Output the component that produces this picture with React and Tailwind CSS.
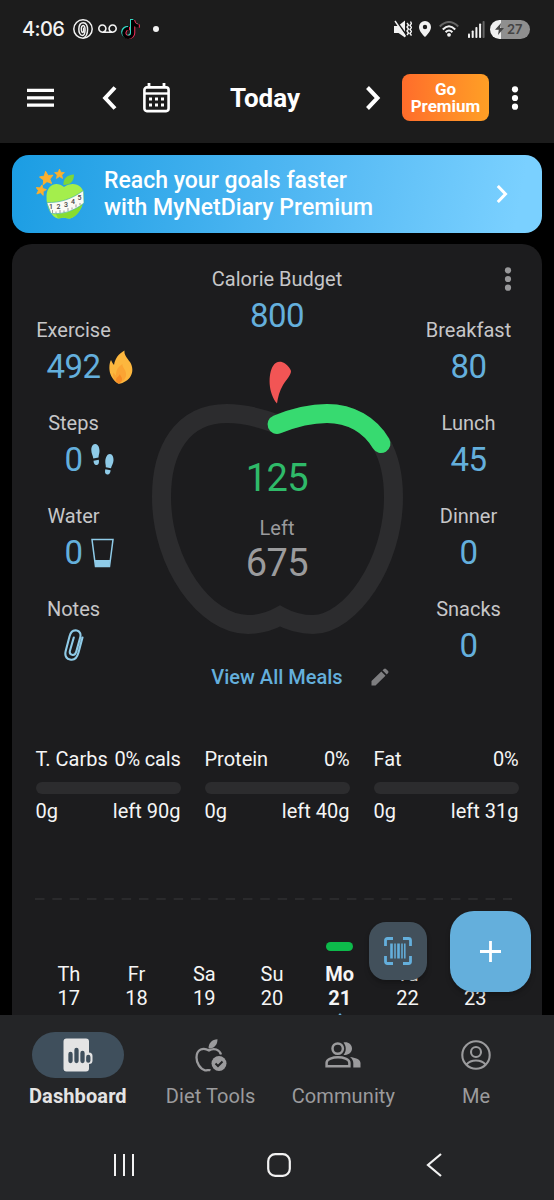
import { FaTiktok } from 'react-icons/fa';
import { MdVoicemail } from 'react-icons/md';
import clsx from 'clsx';

const APPLE =
    'M277 424 C293 418 309 413.5 327 413.5 C351 413.5 370 425 381 443 C389 457 393.5 475 393.5 497 C393.5 564 350 624.5 313 624.5 C301 624.5 291 622 280 616 C269 622 260 624.5 248 624.5 C205 624.5 161.5 564 161.5 497 C161.5 450 182 413.5 227 413.5 C245 413.5 261 418 277 424 Z';

const macros = [
    { name: 'T. Carbs', share: '0% cals', eaten: '0g', left: 'left 90g' },
    { name: 'Protein', share: '0%', eaten: '0g', left: 'left 40g' },
    { name: 'Fat', share: '0%', eaten: '0g', left: 'left 31g' },
];

const days = [
    { day: 'Th', date: 17 },
    { day: 'Fr', date: 18 },
    { day: 'Sa', date: 19 },
    { day: 'Su', date: 20 },
    { day: 'Mo', date: 21, active: true },
    { day: 'Tu', date: 22 },
    { day: 'We', date: 23 },
];

const meals = [
    { label: 'Breakfast', value: 80 },
    { label: 'Lunch', value: 45 },
    { label: 'Dinner', value: 0 },
    { label: 'Snacks', value: 0 },
];

const FlameIcon = () => (
    <svg width="24" height="34" viewBox="0 0 24 34">
        <path d="M15.500 0.500C15 5 18 8 21 12C25 18 24 27 17 31C14 33 11 34 9 33.500C5 31 1 26 0.500 20C0 15 1 12 2 10C3 12 4 14 5 15C6 9 9 4 15.500 0.500Z" fill="#fdb73e" />
        <path d="M13.500 14C13 18 18 20 17 26C16.500 29 14 32 9.500 33.500C5 31 3 27 4.500 22.500C5.500 24 6 25 7 25.500C7 20 9 17 13.500 14Z" fill="#fba433" />
        <path d="M11 24C11 26 13.500 27 13 30C12.500 32 11 33 9.500 33.500C7 32 6.500 30 7.500 28C8.500 27 10 26 11 24Z" fill="#f78d25" />
    </svg>
);

const StepsIcon = () => (
    <svg width="23" height="31" viewBox="0 0 23 31" fill="#8fcbe8">
        <path d="M4 0C7 -0.200 8.500 3.500 8.500 7C8.500 9.500 7.600 11 7.500 13.500L2.300 14.500C2 11.500 0.300 9.500 0.300 6C0.300 2.800 1.600 0.200 4 0Z" />
        <path d="M2.500 16.800L7.800 15.700C8.300 18.500 7.900 20.700 5.800 21C3.500 21.300 2.700 19.500 2.500 16.800Z" />
        <path d="M19 10C21.400 10.200 22.700 13 22.500 16.500C22.300 20 20.400 21.500 20 24.300L14.800 23.200C15 21 14.100 19.500 14.300 17C14.600 13.300 16.200 9.800 19 10Z" />
        <path d="M14.300 25.200L19.600 26.300C19.400 29 18.200 31 16 30.500C13.800 30 13.700 27.700 14.300 25.200Z" />
    </svg>
);

const WaterIcon = () => (
    <svg width="23" height="30" viewBox="0 0 23 30">
        <path d="M1 1.500H22L18.500 28.500H4.500Z" fill="none" stroke="#8fcbe8" strokeWidth="1.500" />
        <path d="M3.800 22H19.200L18.400 29H4.600Z" fill="#8fcbe8" />
    </svg>
);

const ClipIcon = () => (
    <svg width="20" height="32" viewBox="0 0 20 32" fill="none" stroke="#8fcbe8" strokeWidth="2.100" strokeLinecap="round">
        <path d="M18.500 8.500L14.500 23.500C12.800 29.800 9.500 31.400 6 30.500C2.300 29.500 0.600 26.500 1.700 22L5.500 7.500C6.600 3 9.500 0.800 12.800 1.500C16 2.300 17.100 5 16.200 8.500L12.300 22.500C11.500 25.300 9.800 26.300 8 25.800C6 25.200 5.400 23.600 6 21.500L9.800 8.500" />
    </svg>
);

const stats = [
    { label: 'Exercise', value: '492', icon: <FlameIcon /> },
    { label: 'Steps', value: '0', icon: <StepsIcon /> },
    { label: 'Water', value: '0', icon: <WaterIcon /> },
];

const Dots = ({ className }) => (
    <svg width="8" height="26" viewBox="0 0 8 26" className={className} fill="currentColor">
        <circle cx="4" cy="4.300" r="3.100" />
        <circle cx="4" cy="13" r="3.100" />
        <circle cx="4" cy="21.700" r="3.100" />
    </svg>
);

const StatusBar = () => (
    <div className="flex h-[58px] items-center pl-[22px] pr-6 text-[#f2f2f2]">
        <span className="w-[43px] font-[Inter] text-[20px] font-medium leading-6 tracking-[-0.6px]">4:06</span>
        <svg width="20" height="20" viewBox="0 0 20 20" className="ml-2" fill="none" stroke="currentColor" strokeWidth="1.500">
            <circle cx="10" cy="10" r="9.200" />
            <path d="M10 13.500C8 13.500 7.500 6.500 10.200 6.500C13 6.500 12.500 16.500 9.500 16.500C4.500 16.500 4.500 3.700 10.200 3.700C16.500 3.700 15.500 17 10.500 19" />
            <path d="M10 13.500C11.300 13 10.800 9 10 9" />
        </svg>
        <MdVoicemail className="ml-[5px] h-5 w-[19px]" />
        <div className="relative ml-[5px] h-5 w-[19px]">
            <FaTiktok className="absolute -left-px top-0 h-[19px] w-[17px] text-[#35d8c5]" />
            <FaTiktok className="absolute left-px top-px h-[19px] w-[17px] text-[#f5305c]" />
            <FaTiktok className="absolute left-0 top-[0.5px] h-[19px] w-[17px] text-black" />
        </div>
        <span className="ml-3 size-1.5 rounded-full bg-current" />
        <div className="ml-auto flex items-center">
            <svg width="18" height="19" viewBox="0 0 18 19" fill="currentColor">
                <path d="M0 6H4L11 0.500V17.500L4.500 13H0Z" />
                <path d="M1.500 0L13.500 16.500" stroke="#1c1c1c" strokeWidth="1.800" />
                <path d="M1 1L11.500 16.500" stroke="currentColor" strokeWidth="1.400" />
                <path d="M13 3L14.500 5L13 7L14.500 9L13 11L14.500 13L13 15M16.500 1.500L17.500 3.500L16 5.500L17.500 7.500L16 9.500L17.500 11.500L16 13.500L17.500 15.500" fill="none" stroke="currentColor" strokeWidth="1.400" />
            </svg>
            <svg width="12" height="16" viewBox="0 0 12 16" className="ml-[7px]" fill="currentColor">
                <path fillRule="evenodd" d="M6 0A6 6 0 0 1 12 6C12 10 8 14 6 16C4 14 0 10 0 6A6 6 0 0 1 6 0ZM6 3.800A2.200 2.200 0 1 0 6 8.200A2.200 2.200 0 0 0 6 3.800Z" />
            </svg>
            <svg width="20" height="16" viewBox="0 0 20 16" className="ml-2" fill="none" strokeWidth="2">
                <path d="M0.800 5.500Q10 -3.500 19.200 5.500" stroke="#666" />
                <path d="M3.800 8.500Q10 2 16.200 8.500M6.600 11.200Q10 7.700 13.400 11.200" stroke="currentColor" />
                <circle cx="10" cy="13.800" r="1.900" fill="currentColor" />
            </svg>
            <svg width="17" height="17" viewBox="0 0 17 17" className="ml-[9px]" fill="currentColor">
                <rect x="0" y="12.500" width="2" height="4.500" rx="0.800" />
                <rect x="3.700" y="9.500" width="2" height="7.500" rx="0.800" />
                <rect x="7.400" y="6" width="2" height="11" rx="0.800" />
                <rect x="11.100" y="2.500" width="2" height="14.500" rx="0.800" />
                <rect x="14.600" y="0" width="2" height="17" rx="0.800" fill="#666" />
            </svg>
            <div className="ml-[5px] flex h-[19px] w-10 items-center rounded-full bg-linear-to-r from-[#f0f0f0] from-27% to-[#8f8f8f] to-27% text-[#444]">
                <svg width="9" height="12" viewBox="0 0 9 12" className="ml-[5px]" fill="currentColor">
                    <path d="M6 0L0 6.800H3.800L3 12L9 5H5.200Z" />
                </svg>
                <span className="ml-[3px] font-[Inter] text-[13px] font-semibold leading-none">27</span>
            </div>
        </div>
    </div>
);

const Toolbar = () => (
    <div className="flex h-[79px] items-center pl-[27px] text-white">
        <svg width="27" height="20" viewBox="0 0 27 20" fill="currentColor">
            <path d="M0 0.800H27V4H0ZM0 8.300H27V11.500H0ZM0 15.500H27V18.700H0Z" />
        </svg>
        <svg width="15" height="24" viewBox="0 0 15 24" className="ml-[48px]" fill="none" stroke="currentColor" strokeWidth="4">
            <path d="M13 1.500L3.200 12L13 22.500" />
        </svg>
        <svg width="27" height="30" viewBox="0 0 27 30" className="ml-[26px]" fill="none" stroke="currentColor">
            <rect x="1.400" y="4.400" width="24.200" height="23.700" rx="2.500" strokeWidth="2.600" />
            <path d="M1 10.500H26" strokeWidth="2.400" />
            <path d="M6 0V4M21 0V4" strokeWidth="2.800" />
            <path d="M6 16H21M6 22H21" strokeWidth="3" strokeDasharray="3 3" />
        </svg>
        <h1 className="ml-[60px] w-[72px] whitespace-nowrap text-[26px] font-bold leading-8">Today</h1>
        <svg width="15" height="24" viewBox="0 0 15 24" className="ml-[64px]" fill="none" stroke="currentColor" strokeWidth="4">
            <path d="M1.500 1.500L11.500 12L1.500 22.500" />
        </svg>
        <button className="ml-[21px] flex h-[47px] w-[87px] flex-col items-center justify-center rounded-lg bg-linear-to-r from-[#ff6c2b] to-[#ff9f25] text-[17px] font-bold leading-[17px]">
            <span>Go</span>
            <span>Premium</span>
        </button>
        <Dots className="ml-[22px]" />
    </div>
);

const Star = ({ x, y, s, a = 0 }) => (
    <path transform={`translate(${x} ${y}) rotate(${a}) scale(${s})`} d="M0 -7L2 -2.500L7 -2L3.300 1.400L4.400 6.400L0 3.700L-4.400 6.400L-3.300 1.400L-7 -2L-2 -2.500Z" fill="#fbb02d" stroke="#fbb02d" strokeWidth="1" strokeLinejoin="round" />
);

const PremiumBanner = () => (
    <div className="flex h-[78px] items-center rounded-[17px] bg-linear-[100deg] from-[#1b9de3] via-[#52b8f3] via-55% to-[#7ad0ff] to-95% pl-6 text-white">
        <svg width="50" height="52" viewBox="0 0 50 52">
            <Star x={10.5} y={10} s={0.95} a={-8} />
            <Star x={23.5} y={6} s={0.7} />
            <Star x={5} y={22} s={0.75} a={12} />
            <path d="M27.500 17C27 10.500 31 7 38 6.500C38 13 34.500 17 27.500 17Z" fill="#7ed638" />
            <path d="M28 19C36 13 48 16 48 28C48 40 39 50.500 33 50.500C30 50.500 29 49.500 27.500 49.500C26 49.500 25 50.500 22 50.500C16 49.500 10 40 10.500 28C11 16 21 13 28 19Z" fill="#a4ee4c" />
            <path d="M20 46C34 47 44 38 47.500 30C47.500 41 39 50.500 33 50.500C30 50.500 29 49.500 27.500 49.500C26 49.500 25 50.500 22 50.500Z" fill="#87dc30" />
            <path d="M10.800 34.500C24 35 36 31 47.500 22.500L48 35C38 43 27 46.500 15 45.500Z" fill="#fbfbf5" stroke="#35a9a0" strokeWidth="0.600" />
            <path d="M16.500 45V42M20 45.500V43.500M24 45V42M28 44.500V42.500M32 43V40M36 41.500V39.500M40 39.500V36.500M44 37V35" stroke="#777" strokeWidth="0.700" />
            <g fill="#444" className="text-[7px] font-medium">
                <text x="13" y="41">1</text>
                <text x="20.5" y="40.5">2</text>
                <text x="28" y="38.5">3</text>
                <text x="35" y="35.5">4</text>
                <text x="41.5" y="31.5">5</text>
            </g>
        </svg>
        <p className="ml-[18px] whitespace-nowrap text-[23px] font-medium leading-[27px]">
            Reach your goals faster
            <br />
            with MyNetDiary Premium
        </p>
        <svg width="12" height="18" viewBox="0 0 12 18" className="ml-auto mr-[34px]" fill="none" stroke="currentColor" strokeWidth="3">
            <path d="M1.800 1L9.500 9L1.800 17" />
        </svg>
    </div>
);

const Label = ({ children }) => <p className="h-6 text-center text-[20px] leading-6 text-[#c6c6c8]">{children}</p>;

const Amount = ({ children }) => <span className="block h-10 pt-px text-center text-[33px] leading-10 tracking-[-0.5px] text-[#64afdc]">{children}</span>;

const CalorieSummary = () => (
    <section className="grid h-[470px] grid-cols-[135px_260px_135px]">
        <div className="pr-3 pt-[74px]">
            {stats.map((s) => (
                <div key={s.label} className="h-[93px]">
                    <Label>{s.label}</Label>
                    <div className="mt-1 grid h-10 grid-cols-[1fr_auto_1fr] items-center">
                        <div className="col-start-2">
                            <Amount>{s.value}</Amount>
                        </div>
                        <span className="ml-2 pt-px">{s.icon}</span>
                    </div>
                </div>
            ))}
            <Label>Notes</Label>
            <div className="mt-1 flex h-10 items-center justify-center">
                <ClipIcon />
            </div>
        </div>

        <div className="flex flex-col items-center pt-[23px]">
            <Label>Calorie Budget</Label>
            <div className="mt-1">
                <Amount>800</Amount>
            </div>
            <div className="mt-5 grid h-[285px] w-[260px]">
                <svg width="260" height="285" viewBox="147 355 260 285" fill="none" strokeWidth="19" className="col-start-1 row-start-1">
                    <path d={APPLE} stroke="#2c2c2e" />
                    <path d="M277 424.500C293 418 309 413.500 327 413.500C351 413.500 370 425 381 443.500" stroke="#37da70" strokeLinecap="round" />
                    <path d="M277 403.500C268 393 268 374 273 366C276 361 281 361 285 363.500C288 365.500 290.500 369 291 371C291 375 287 379 283 385C279.500 391 278 397 277 403.500Z" fill="#f25555" />
                </svg>
                <div className="col-start-1 row-start-1 flex flex-col items-center pt-[99px]">
                    <span className="text-[38px] leading-[48px] tracking-[-0.6px] text-[#2fba69]">125</span>
                    <span className="mt-[14px] text-[20px] leading-6 text-[#9b9b9d]">Left</span>
                    <span className="mt-[-1px] text-[38px] leading-[48px] tracking-[-0.6px] text-[#9b9b9d]">675</span>
                </div>
            </div>
            <div className="mt-[25px] grid w-[260px] grid-cols-[1fr_auto_1fr] items-center">
                <a className="col-start-2 text-[20px] font-medium leading-6 text-[#64afdc]">View All Meals</a>
                <svg width="18" height="18" viewBox="0 0 18 18" className="ml-7" fill="#7e7e80">
                    <path d="M0.500 17.500V13L10.300 3.500L14.500 7.700L4.500 17.500ZM11.500 2.300L13 0.900Q14 0 15 0.900L17.100 3Q18 4 17.100 5L15.700 6.500Z" />
                </svg>
            </div>
        </div>

        <div className="pr-3">
            <div className="flex h-[74px] justify-end pr-[18px] pt-[22px]">
                <Dots className="text-[#98989a]" />
            </div>
            {meals.map((m) => (
                <div key={m.label} className="h-[93px]">
                    <Label>{m.label}</Label>
                    <div className="mt-1">
                        <Amount>{m.value}</Amount>
                    </div>
                </div>
            ))}
        </div>
    </section>
);

const Macros = () => (
    <section className="mt-[33px] grid grid-cols-3 gap-6 pl-[23.5px] pr-[23.5px] text-[20px] leading-6 text-[#f5f5f5]">
        {macros.map((m) => (
            <div key={m.name}>
                <div className="flex justify-between whitespace-nowrap">
                    <span>{m.name}</span>
                    <span className="tracking-[-0.2px]">{m.share}</span>
                </div>
                <div className="mt-[11px] h-3 rounded-full bg-[#2c2c2e]" />
                <div className="mt-[5px] flex justify-between whitespace-nowrap">
                    <span>{m.eaten}</span>
                    <span>{m.left}</span>
                </div>
            </div>
        ))}
    </section>
);

const WeekChart = () => (
    <section className="mt-[75px]">
        <svg width="530" height="2" viewBox="0 0 530 2">
            <path d="M23 1H500" stroke="#38383a" strokeWidth="1.200" strokeDasharray="9.500 7.830" />
        </svg>
        <div className="ml-[23px] grid w-[474px] grid-cols-7 text-center text-[20px] leading-6 text-[#f5f5f5]">
            {days.map((d) => (
                <div key={d.date} className={clsx('flex flex-col items-center', d.active && 'font-bold')}>
                    <span className={clsx('mt-[42px] h-[9px] w-[27px] rounded-full', d.active && 'bg-[#0dba4b]')} />
                    <span className="mt-[11px]">{d.day}</span>
                    <span>{d.date}</span>
                    {d.active && (
                        <svg width="10" height="6" viewBox="0 0 10 6" className="mt-[3px]" fill="#64afdc">
                            <path d="M5 0L10 6H0Z" />
                        </svg>
                    )}
                </div>
            ))}
        </div>
    </section>
);

const DashboardIcon = () => (
    <svg width="30" height="34" viewBox="0 0 30 34">
        <path d="M3.500 0.500H23Q26 0.500 26 3.500V14.500Q29.500 14.500 29.500 18V22.500Q29.500 26 26 26V30.500Q26 33.500 23 33.500H3.500Q0.500 33.500 0.500 30.500V3.500Q0.500 0.500 3.500 0.500Z" fill="#e4e4e4" />
        <path d="M7.500 16V23M13.500 12V23M19.500 15V23M25.300 19V22.700" stroke="#3f4f5c" strokeWidth="4.300" strokeLinecap="round" />
    </svg>
);

const DietIcon = () => (
    <svg width="32" height="34" viewBox="0 0 32 34" fill="none" stroke="#9b9b9d" strokeWidth="2.300">
        <path d="M13.500 10.500C13.500 5 17 1.500 22.500 1.200C22.500 7 19 10.500 13.500 10.500Z" fill="#9b9b9d" stroke="none" />
        <path d="M15.500 32.300C13.500 31.500 12 32.800 10 32.300C5 31 1.500 25 1.500 19.500C1.500 11 8.500 9 14 12.500C19 9.500 24.500 11.500 26 16.500" />
        <circle cx="24" cy="25.500" r="7.500" fill="#9b9b9d" stroke="none" />
        <path d="M20.500 25.500L23 28L27.500 23.500" stroke="#242527" strokeWidth="2" />
    </svg>
);

const CommunityIcon = () => (
    <svg width="36" height="26" viewBox="0 0 36 26" fill="none" stroke="currentColor" strokeWidth="2.500">
        <circle cx="12.700" cy="6.600" r="5.200" />
        <path d="M1.600 24.300V20.800C1.600 17 8 15.300 13 15.300C18 15.300 24.400 17 24.400 20.800V24.300Z" />
        <path d="M18.500 0.500C23 -0.500 27 2.500 27 6.600C27 10.700 23 13.800 18.500 12.700C21.500 9.500 21.500 4 18.500 0.500ZM25 15C30 15.500 35.500 17.300 35.500 21V25.500H28.300V21C28.300 18.500 27 16.500 25 15Z" fill="currentColor" stroke="none" />
    </svg>
);

const MeIcon = () => (
    <svg width="30" height="30" viewBox="0 0 30 30" fill="none" stroke="currentColor" strokeWidth="2.100">
        <circle cx="15" cy="15" r="13.700" />
        <circle cx="15" cy="12" r="5" />
        <path d="M5.500 24.500C8 21.500 11.500 20.500 15 20.500C18.500 20.500 22 21.500 24.500 24.500" />
    </svg>
);

const tabs = [
    { label: 'Dashboard', icon: <DashboardIcon />, active: true },
    { label: 'Diet Tools', icon: <DietIcon /> },
    { label: 'Community', icon: <CommunityIcon /> },
    { label: 'Me', icon: <MeIcon /> },
];

const BottomNav = () => (
    <footer className="z-10 h-[185px] bg-[#242527]">
        <nav className="grid h-[115px] grid-cols-4 pl-[11.5px] pr-[11.5px] pt-[17px]">
            {tabs.map((t) => (
                <div key={t.label} className={clsx('flex flex-col items-center text-[20px] leading-6', t.active ? 'font-bold text-[#e4e4e4]' : 'text-[#9b9b9d]')}>
                    <div className={clsx('flex h-[46px] w-[92px] items-center justify-center rounded-full', t.active && 'bg-[#3f4f5c]')}>{t.icon}</div>
                    <span className="mt-[6px] tracking-[0.1px]">{t.label}</span>
                </div>
            ))}
        </nav>
        <div className="flex h-[70px] items-start pl-[113px] pt-[23px] text-[#f2f2f2]">
            <svg width="22" height="24" viewBox="0 0 22 24" stroke="currentColor" strokeWidth="2">
                <path d="M2 1V23M11 1V23M20 1V23" />
            </svg>
            <svg width="24" height="24" viewBox="0 0 24 24" className="ml-[132px]" fill="none" stroke="currentColor" strokeWidth="2.200">
                <rect x="1.200" y="1.200" width="21.600" height="21.600" rx="7" />
            </svg>
            <svg width="16" height="24" viewBox="0 0 16 24" className="ml-[135px]" fill="none" stroke="currentColor" strokeWidth="2.200">
                <path d="M15 1L2 12L15 23" />
            </svg>
        </div>
    </footer>
);

const App = () => {
    return (
        <div className="relative flex h-[1200px] w-[554px] flex-col overflow-hidden bg-black font-[Roboto,sans-serif]">
            <header className="h-[143px] shrink-0 bg-[#1c1c1c]">
                <StatusBar />
                <Toolbar />
            </header>

            <main className="h-[872px] shrink-0 overflow-hidden px-3 pt-3">
                <PremiumBanner />
                <div className="mt-[11px] h-[800px] rounded-t-[20px] bg-[#1c1c1e]">
                    <CalorieSummary />
                    <Macros />
                    <WeekChart />
                </div>
            </main>

            <BottomNav />

            <button className="absolute left-[369px] top-[922px] flex size-[58px] items-center justify-center rounded-[17px] bg-[#42505b] shadow-md shadow-black/20">
                <svg width="28" height="28" viewBox="0 0 28 28" fill="none" stroke="#64afdc">
                    <path d="M1.500 9V3.500Q1.500 1.500 3.500 1.500H9M19 1.500H24.500Q26.500 1.500 26.500 3.500V9M26.500 19V24.500Q26.500 26.500 24.500 26.500H19M9 26.500H3.500Q1.500 26.500 1.500 24.500V19" strokeWidth="2.800" />
                    <path d="M7.500 6.500V21.500M14.500 6.500V21.500" strokeWidth="2.600" />
                    <path d="M11 6.500V21.500M18 6.500V21.500M20.800 6.500V21.500" strokeWidth="1.500" />
                </svg>
            </button>
            <button className="absolute left-[450px] top-[911px] flex size-[81px] items-center justify-center rounded-[24px] bg-[#64afdc] shadow-md shadow-black/20">
                <svg width="21" height="21" viewBox="0 0 21 21" stroke="#fff" strokeWidth="2.800">
                    <path d="M0 10.500H21M10.500 0V21" />
                </svg>
            </button>
        </div>
    );
};

export default App;
